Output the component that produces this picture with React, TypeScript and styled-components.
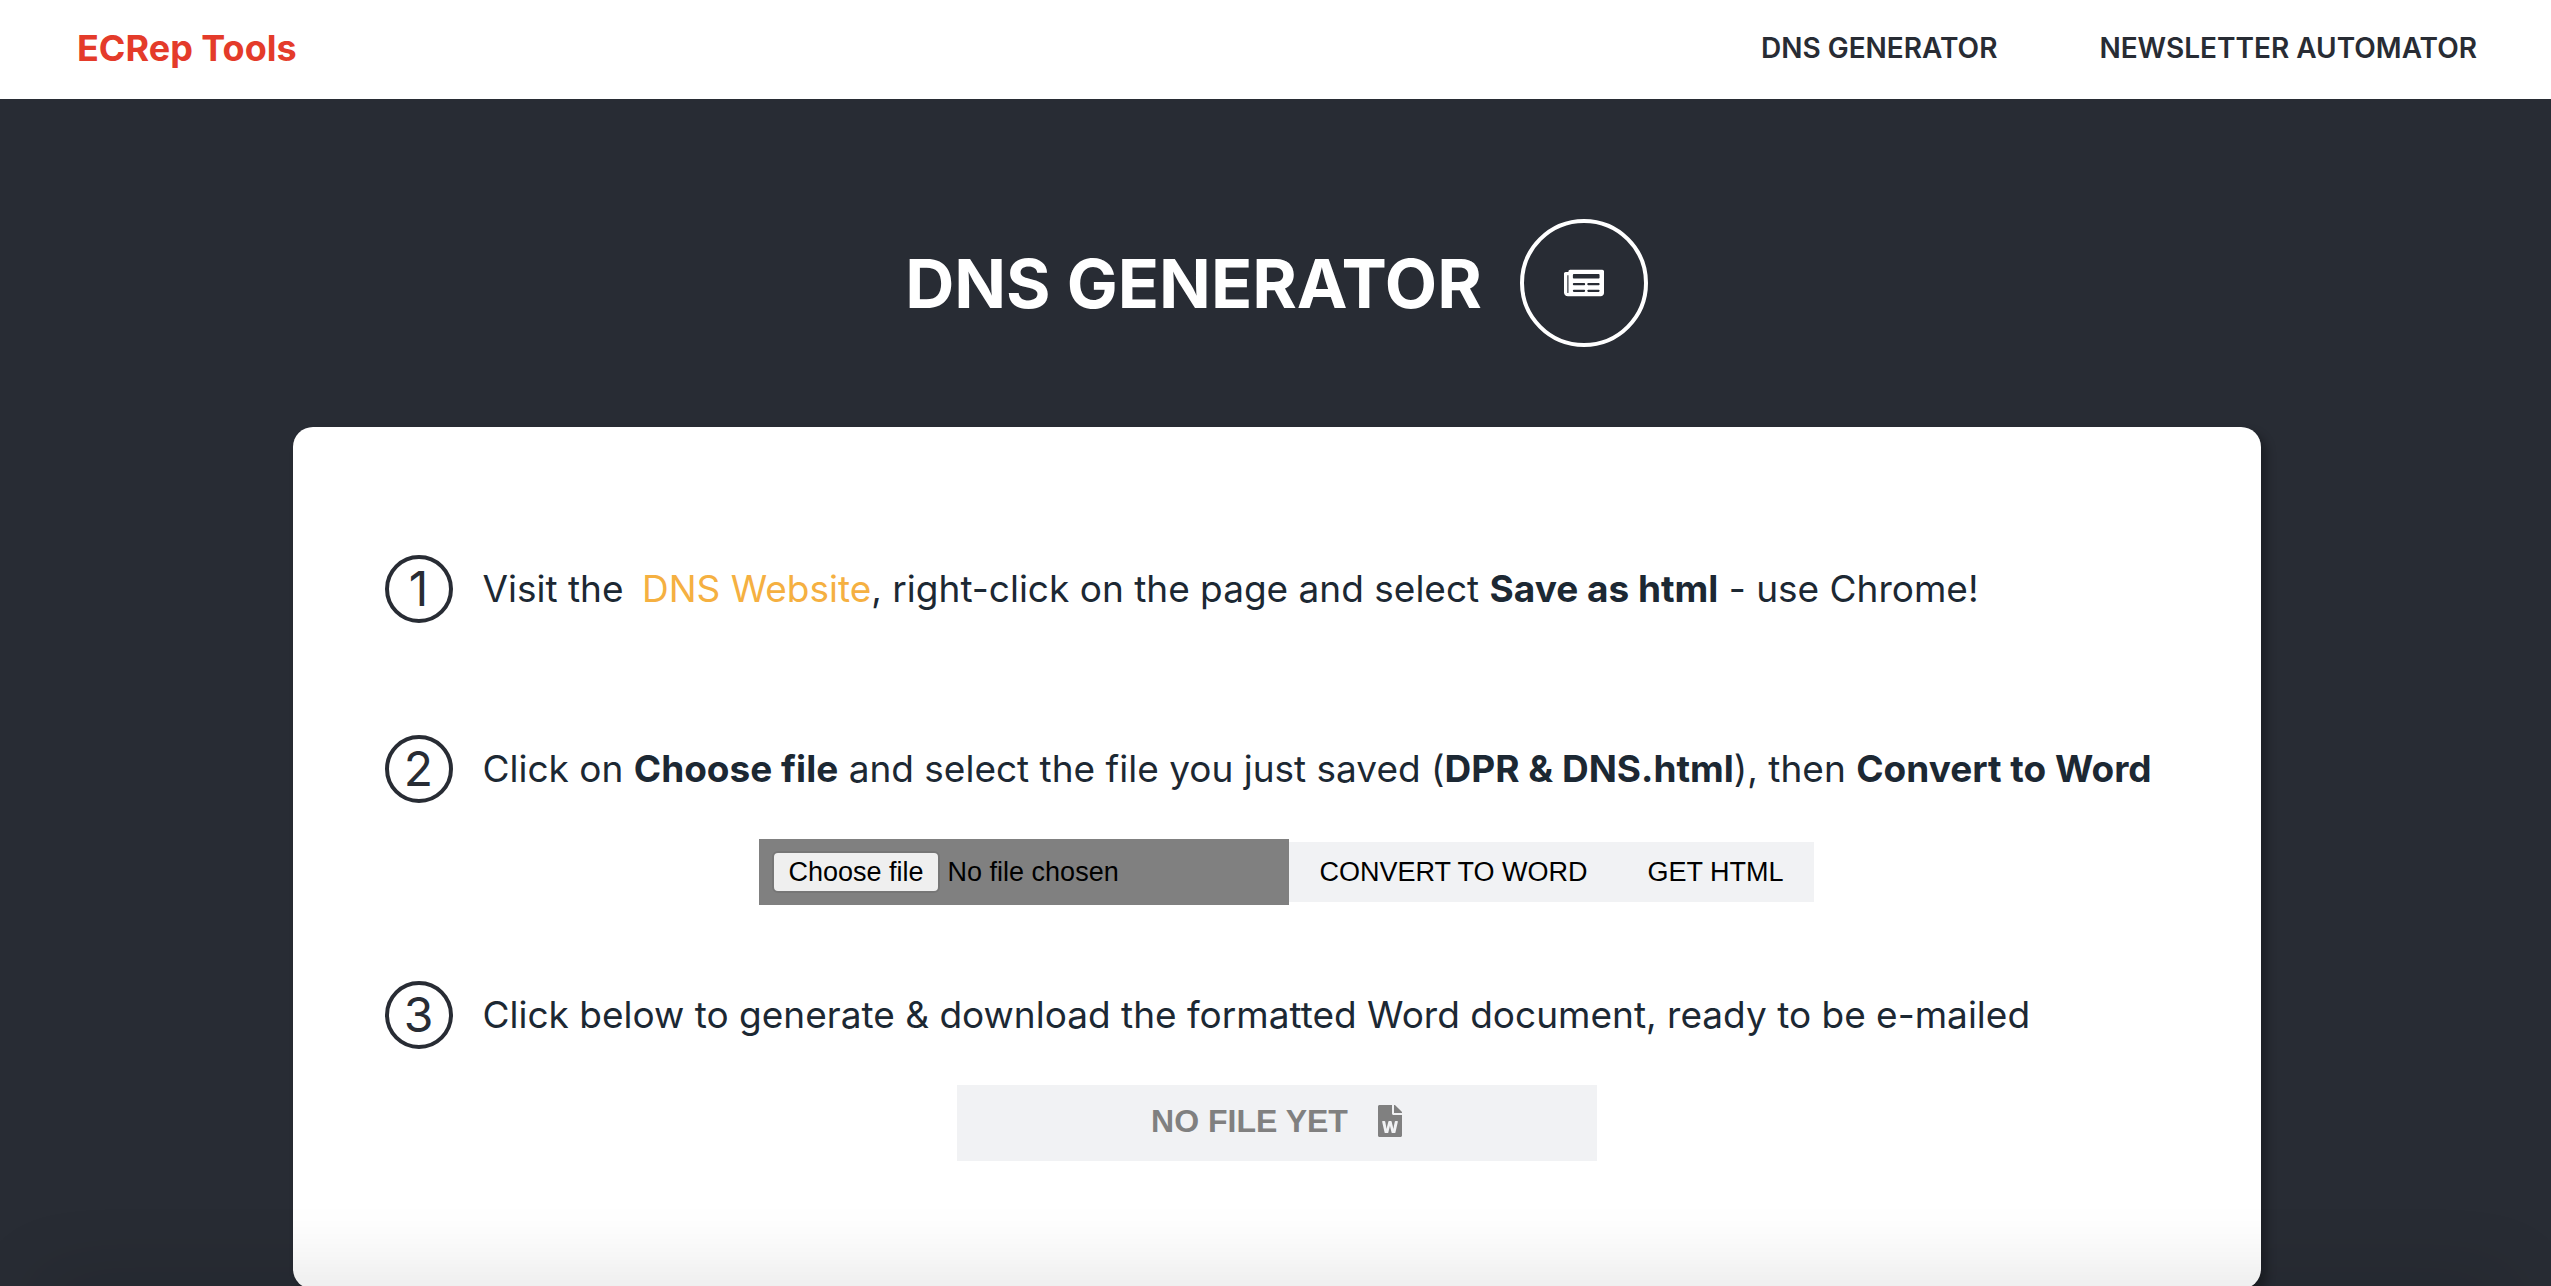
import React, { useState } from "react";
import styled, { createGlobalStyle } from "styled-components";
import { FaFileWord, FaNewspaper } from "react-icons/fa";

const ink = "#282c34";

const GlobalStyle = createGlobalStyle`
  *, *::before, *::after { box-sizing: border-box; }
  body {
    margin: 0;
    background: ${ink};
    font-family: Inter, "Open Sans", sans-serif;
  }
`;

const Page = styled.div`
  height: 100vh;
  overflow: hidden;
  background: ${ink};
`;

const NavBar = styled.header`
  display: flex;
  align-items: center;
  justify-content: space-between;
  height: 99px;
  padding: 0 74px 4px 77px;
  background: #fff;
`;

const Brand = styled.a`
  color: #e43b2a;
  font-size: 36px;
  font-weight: 700;
  text-decoration: none;
`;

const NavLinks = styled.nav`
  display: flex;
  gap: 102px;
`;

const NavLink = styled.a`
  color: ${ink};
  font-size: 28px;
  font-weight: 600;
  text-decoration: none;
`;

const Main = styled.main`
  display: flex;
  flex-direction: column;
  align-items: center;
  padding: 120px 0 0 2px;
`;

const Heading = styled.div`
  display: flex;
  align-items: center;
  gap: 38px;
  margin-bottom: 80px;
  color: #fff;
`;

const Title = styled.h1`
  margin: 0;
  font-size: 68px;
  font-weight: 700;
  line-height: 84px;
`;

const IconRing = styled.span`
  display: grid;
  place-items: center;
  width: 128px;
  height: 128px;
  border: 4px solid #fff;
  border-radius: 50%;
  font-size: 40px;
`;

const Card = styled.section`
  display: flex;
  flex-direction: column;
  min-width: min(1968px, 100%);
  padding: 128px 92px;
  background: #fff;
  border-radius: 20px;
  box-shadow: 6px 6px 10px rgba(0, 0, 0, 0.3);
`;

const Step = styled.div<{ $after: number }>`
  display: flex;
  align-items: center;
  gap: 30px;
  margin-bottom: ${(p) => p.$after}px;
`;

const StepNumber = styled.span`
  display: grid;
  place-items: center;
  flex: none;
  width: 68px;
  height: 68px;
  border: 4px solid ${ink};
  border-radius: 50%;
  color: ${ink};
  font-size: 48px;
  line-height: 60px;
`;

const StepText = styled.p`
  margin: 0;
  color: #1c2833;
  font-size: 37px;
  line-height: 48px;
  white-space: nowrap;
`;

const Strong = styled.strong`
  font-weight: 700;
`;

const SiteLink = styled.a`
  margin-left: 8px;
  color: #f5b041;
  text-decoration: none;
`;

const UploadRow = styled.form`
  display: flex;
  align-items: center;
  align-self: center;
  margin: 0 0 76px 20px;
  font-family: "Liberation Sans", Arial, sans-serif;
  font-size: 27px;
`;

const FilePicker = styled.label`
  position: relative;
  display: flex;
  align-items: center;
  gap: 8px;
  width: 530px;
  height: 66px;
  padding: 0 13px;
  background: #808080;
  color: #000;
`;

const FileInput = styled.input`
  position: absolute;
  inset: 0;
  opacity: 0;
  cursor: pointer;
`;

const FileButton = styled.span`
  padding: 2px 14px;
  background: #efefef;
  border: 2px solid #767676;
  border-radius: 6px;
  line-height: 34px;
`;

const ActionButton = styled.button`
  height: 60px;
  padding: 0 30px;
  border: 0;
  background: #f1f2f4;
  color: #000;
  font: inherit;
`;

const DownloadButton = styled.button`
  display: flex;
  align-items: center;
  justify-content: center;
  align-self: center;
  gap: 30px;
  width: 640px;
  height: 76px;
  padding: 0 0 4px;
  border: 0;
  background: #f1f2f4;
  color: #808080;
  font-family: "Liberation Sans", Arial, sans-serif;
  font-size: 32px;
  font-weight: 700;
`;

const WordIcon = styled(FaFileWord)`
  width: 24px;
  height: 32px;
`;

const BottomShade = styled.div`
  position: fixed;
  right: 40px;
  bottom: -40px;
  left: 40px;
  height: 40px;
  box-shadow: 0 0 80px rgba(0, 0, 0, 0.18);
  pointer-events: none;
`;

export default function App() {
  const [fileName, setFileName] = useState("No file chosen");

  return (
    <Page>
      <GlobalStyle />
      <NavBar>
        <Brand href="#">ECRep Tools</Brand>
        <NavLinks>
          <NavLink href="#dns">DNS GENERATOR</NavLink>
          <NavLink href="#newsletter">NEWSLETTER AUTOMATOR</NavLink>
        </NavLinks>
      </NavBar>
      <Main>
        <Heading>
          <Title>DNS GENERATOR</Title>
          <IconRing>
            <FaNewspaper />
          </IconRing>
        </Heading>
        <Card>
          <Step $after={112}>
            <StepNumber>1</StepNumber>
            <StepText>
              Visit the <SiteLink href="#site">DNS Website</SiteLink>, right-click on the page and
              select <Strong>Save as html</Strong> - use Chrome!
            </StepText>
          </Step>
          <Step $after={36}>
            <StepNumber>2</StepNumber>
            <StepText>
              Click on <Strong>Choose file</Strong> and select the file you just saved (
              <Strong>DPR &amp; DNS.html</Strong>), then <Strong>Convert to Word</Strong>
            </StepText>
          </Step>
          <UploadRow onSubmit={(e) => e.preventDefault()}>
            <FilePicker>
              <FileInput
                type="file"
                onChange={(e) => setFileName(e.target.files?.[0]?.name ?? "No file chosen")}
              />
              <FileButton>Choose file</FileButton>
              <span>{fileName}</span>
            </FilePicker>
            <ActionButton type="submit">CONVERT TO WORD</ActionButton>
            <ActionButton type="button">GET HTML</ActionButton>
          </UploadRow>
          <Step $after={36}>
            <StepNumber>3</StepNumber>
            <StepText>
              Click below to generate &amp; download the formatted Word document, ready to be
              e-mailed
            </StepText>
          </Step>
          <DownloadButton type="button" disabled>
            NO FILE YET
            <WordIcon />
          </DownloadButton>
        </Card>
      </Main>
      <BottomShade />
    </Page>
  );
}
